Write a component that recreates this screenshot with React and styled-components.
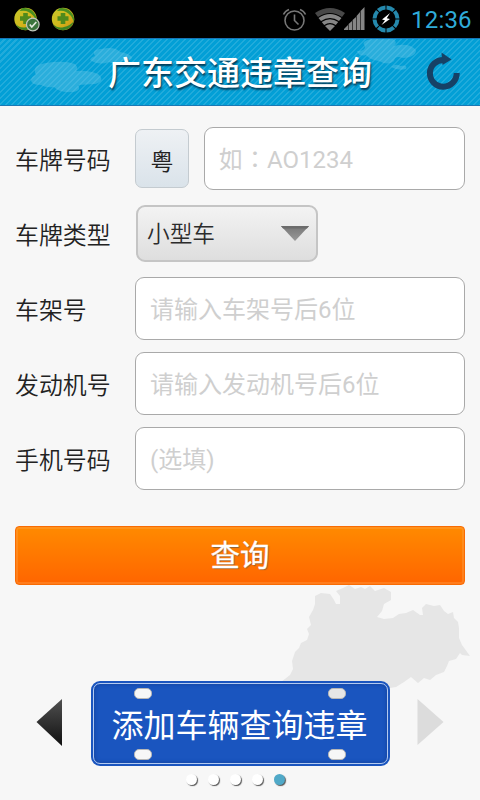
import React from "react";
import styled, { createGlobalStyle } from "styled-components";

const GlobalStyle = createGlobalStyle`
  * { box-sizing: border-box; }
  body {
    margin: 0;
    background: #f7f7f7;
    font-family: Roboto, "Noto Sans CJK SC", sans-serif;
  }
  input, button { font-family: inherit; margin: 0; }
`;

const Screen = styled.div`
  width: 480px;
  height: 800px;
  overflow: hidden;
  display: flex;
  flex-direction: column;
  background: #f7f7f7;
  color: #222;
`;

const StatusBar = styled.div`
  height: 38px;
  flex: none;
  display: flex;
  background: #000;
  justify-content: space-between;
`;

const StatusIcons = styled.svg`
  display: block;
  flex: none;
`;

const StatusRight = styled.div`
  display: flex;
`;

const Clock = styled.div`
  width: 74px;
  padding-left: 5px;
  font-size: 24px;
  line-height: 40px;
  letter-spacing: 0.2px;
  font-weight: 400;
  color: #2fabd9;
`;

const Header = styled.header`
  position: relative;
  height: 68px;
  flex: none;
  display: flex;
  align-items: center;
  justify-content: center;
  border-top: 1px solid #1675b8;
  border-bottom: 1px solid #1b78b4;
  background: repeating-linear-gradient(135deg, #029fd6 0 2.8px, #21abdb 2.8px 4.25px);
`;

const Clouds = styled.svg`
  position: absolute;
  inset: 0;
`;

const Title = styled.h1`
  position: relative;
  margin: 0;
  padding-top: 4px;
  font-size: 33px;
  line-height: 62px;
  font-weight: 500;
  color: #fff;
  text-shadow: 1px 2px 2px rgba(0, 30, 50, 0.8);
`;

const Refresh = styled.button`
  position: absolute;
  right: 16px;
  top: 12px;
  width: 38px;
  height: 42px;
  padding: 0;
  border: 0;
  background: none;
  svg { display: block; }
`;

const Form = styled.form`
  display: flex;
  flex-direction: column;
  gap: 12px;
  padding: 21px 15px 0;
`;

const Row = styled.div`
  display: flex;
  height: 63px;
  align-items: center;
`;

const Label = styled.label`
  width: 120px;
  flex: none;
  font-size: 23.9px;
  line-height: 36px;
  font-weight: 350;
  padding-top: 4px;
`;

const Field = styled.input`
  flex: 1;
  min-width: 0;
  height: 63px;
  padding: 3px 14px 0;
  border: 1px solid #a9a9a9;
  border-radius: 9px;
  background: #fff;
  font-size: 24px;
  font-weight: 400;
  outline: none;
  font-family: Roboto, ${(p) => (p.$centred ? '"Noto Sans CJK TC"' : '"Noto Sans CJK SC"')}, sans-serif;
  &::placeholder { color: #cfcfcf; opacity: 1; }
`;

const Province = styled.button`
  width: 54px;
  height: 59px;
  margin-right: 15px;
  padding: 3px 0 0;
  border: 1px solid #c4cbd0;
  border-radius: 7px;
  background: linear-gradient(#eef1f4, #dae3ea);
  font-size: 23px;
  font-weight: 400;
  color: #222;
`;

const Picker = styled.button`
  width: 182px;
  height: 57px;
  margin: 0 0 0 1px;
  padding: 0 9px 2px;
  display: flex;
  align-items: center;
  justify-content: space-between;
  border: 2px solid #c5c5c5;
  border-radius: 9px;
  background: linear-gradient(#f3f3f3, #dedede);
  font-size: 22.7px;
  font-weight: 350;
  color: #2c2c2c;
  svg { margin: 2px -2px 0 0; }
`;

const Submit = styled.button`
  height: 59px;
  margin-top: 24px;
  padding: 1px 0 0;
  border: 1px solid #f96b03;
  border-radius: 4px;
  background: linear-gradient(#ff8a00, #ff6500);
  box-shadow: inset 0 0 0 2px rgba(255, 160, 70, 0.4);
  color: #fff;
  font-size: 29.5px;
  font-weight: 400;
  -webkit-text-stroke: 0.3px #fff;
  line-height: 56px;
  text-shadow: 1px 1px 1px rgba(120, 90, 60, 0.8);
`;

const Footer = styled.div`
  position: relative;
  flex: 1;
  display: flex;
  flex-direction: column;
  align-items: center;
  padding-top: 96px;
`;

const MapArt = styled.svg`
  position: absolute;
  left: 280px;
  top: 0;
`;

const Carousel = styled.div`
  position: relative;
  width: 408px;
  height: 85px;
  display: flex;
  align-items: center;
  justify-content: space-between;
`;

const ArrowIcon = styled.svg`
  flex: none;
  margin-bottom: 2px;
`;

const Plate = styled.button`
  position: relative;
  width: 299px;
  height: 85px;
  padding: 2px;
  border: 0;
  border-radius: 9px;
  background: #1a55bf;
  color: #fff;
`;

const PlateFace = styled.div`
  height: 81px;
  display: flex;
  flex-direction: column;
  align-items: center;
  justify-content: space-between;
  padding: 4px 41px 3px 40px;
  border: 1px solid #b4caf0;
  border-radius: 7px;
  box-shadow: inset 0 0 4px #123f96;
`;

const Holes = styled.div`
  width: 100%;
  display: flex;
  justify-content: space-between;
`;

const Hole = styled.i`
  width: 18px;
  height: 11px;
  border: 1px solid #b7b7b7;
  border-radius: 5px;
  background: ${(p) => (p.$dim ? "#e6e6e6" : "#f7f7f7")};
`;

const PlateText = styled.span`
  padding-top: 4px;
  font-size: 32px;
  line-height: 40px;
  font-weight: 400;
  white-space: nowrap;
`;

const Dots = styled.div`
  display: flex;
  gap: 11px;
  margin-top: 8px;
  padding-right: 10px;
`;

const Dot = styled.i`
  width: 11px;
  height: 11px;
  border-radius: 50%;
  background: ${(p) => (p.$active ? "#50a9c8" : "#fff")};
  box-shadow: 1px 1px 1px #555;
`;

function Coin({ x, checked }) {
  return (
    <g transform={`translate(${x} 19)`}>
      <circle r="11.2" fill="url(#coin)" />
      <path d="M-3-11Q6-12 10-4Q12 0 11 3Q8-5 3-7Q0-9-6-8Z" fill="#4b8f20" />
      <path d="M-10 5Q-5 10 1 8Q7 7 11 2Q8 11 0 11.2Q-7 11-10 5Z" fill="#3d8524" />
      <path d="M-2.3-6H2.3V-2.8H5.5V1.8H2.3V5H-2.3V1.8H-5.5V-2.8H-2.3Z" fill="#4f8a1c" />
      {checked && (
        <g transform="translate(7.3 5.5)">
          <circle r="6.3" fill="#3b733c" stroke="#bfc5bb" strokeWidth="1.2" />
          <path d="M-3 0L-1 2.5L3.5-2.5" fill="none" stroke="#e2e8df" strokeWidth="1.7" />
        </g>
      )}
    </g>
  );
}

function Notifications() {
  return (
    <StatusIcons width="80" height="38">
      <defs>
        <linearGradient id="coin" x1="0" y1="0" x2="1" y2="1">
          <stop offset="0" stopColor="#c3c92e" />
          <stop offset="0.5" stopColor="#d2b81c" />
          <stop offset="1" stopColor="#d08d10" />
        </linearGradient>
      </defs>
      <Coin x={25.5} checked />
      <Coin x={63} />
    </StatusIcons>
  );
}

function SystemIcons() {
  return (
    <StatusIcons width="126" height="38" viewBox="280 0 126 38">
      <g fill="none" stroke="#777" strokeWidth="1.6">
        <circle cx="294.5" cy="20.5" r="9.5" />
        <path d="M294.5 14.5V20.5L298.5 24.5M283.5 14.5Q285 11 289 9.5M305.5 14.5Q304 11 300 9.5" />
      </g>
      <path d="M315 13Q330 3 345 13L342 17Q330 9 318 17Z" fill="#484848" />
      <g fill="#858585">
        <path d="M318.5 18Q330 10 341.5 18L339 21Q330 15 321 21Z" />
        <path d="M321.8 22Q330 16.5 338.2 22L335.8 25Q330 21 324.2 25Z" />
        <path d="M325 26Q330 22.5 335 26L330 31Z" />
        <path d="M344 30V29L348 25V30ZM348.6 30V24L352 21V30ZM352.6 30V20L356 17V30ZM356.6 30V16L360 12V30ZM360.6 30V11L364.5 7V30Z" />
      </g>
      <circle cx="386" cy="19" r="11.5" fill="none" stroke="#2589ad" strokeWidth="4" pathLength="80" strokeDasharray="8.8 1.2" strokeDashoffset="-0.6" />
      <path d="M390 13L382 19.5L385 20.2L381.5 25L390 19L386.8 18.2Z" fill="#fff" />
    </StatusIcons>
  );
}

const rows = [
  { label: "车架号", hint: "请输入车架号后6位" },
  { label: "发动机号", hint: "请输入发动机号后6位" },
  { label: "手机号码", hint: "(选填)" },
];

export default function App() {
  return (
    <Screen>
      <GlobalStyle />
      <StatusBar>
        <Notifications />
        <StatusRight>
          <SystemIcons />
          <Clock>12:36</Clock>
        </StatusRight>
      </StatusBar>
      <Header>
        <Clouds width="480" height="66" viewBox="0 39 480 66" fill="#7ccdea" fillOpacity="0.33">
          <path d="M31 80Q32 76 36 75Q31 65 46 63Q64 60 75 64Q79 68 76 71Q88 70 98 74Q106 81 95 84L78 85Q82 91 72 92Q59 93 54 87Q46 88 41 85Q31 85 31 80Z" />
          <path d="M90 60Q91 57 95 56Q91 50 101 49Q115 46 120 52Q128 53 132 57Q132 61 123 61Q116 66 109 62Q99 66 90 60Z" />
          <path d="M357 51Q366 51 365 46Q360 41 372 39H393Q398 42 394 46Q409 42 416 50Q416 57 403 58Q395 55 394 61Q388 66 379 61Q370 60 366 55Q359 57 357 51Z" />
          <path d="M391 67Q396 63 400 66Q408 64 406 69Q398 71 391 67Z" />
        </Clouds>
        <Title>广东交通违章查询</Title>
        <Refresh type="button" aria-label="刷新">
          <svg width="38" height="42" viewBox="426 51 38 42">
            <path d="M444 59.9A13.4 13.4 0 1 0 456.7 73" fill="none" stroke="#164166" strokeWidth="6" />
            <path d="M441.5 52.5L451.5 59.5L442.5 65Z" fill="#164166" />
          </svg>
        </Refresh>
      </Header>
      <Form>
        <Row>
          <Label>车牌号码</Label>
          <Province type="button">粤</Province>
          <Field $centred placeholder="如：AO1234" />
        </Row>
        <Row>
          <Label>车牌类型</Label>
          <Picker type="button">
            小型车
            <svg width="28" height="16">
              <defs>
                <linearGradient id="arrow" x1="0" y1="0" x2="0" y2="1">
                  <stop offset="0" stopColor="#777" />
                  <stop offset="1" stopColor="#999" />
                </linearGradient>
              </defs>
              <path d="M0 0H28L14 15Z" fill="url(#arrow)" />
              <path d="M0 0H28L26 2.5H2Z" fill="#6c6c6c" />
            </svg>
          </Picker>
        </Row>
        {rows.map((r) => (
          <Row key={r.label}>
            <Label>{r.label}</Label>
            <Field placeholder={r.hint} />
          </Row>
        ))}
        <Submit type="button">查询</Submit>
      </Form>
      <Footer>
        <MapArt width="192" height="125" viewBox="280 585 192 125" fill="#e6e6e6">
          <path d="M281 682L290 675L293 669L292 661L295 652L299 648L301 643L307 640L309 634L307 629L311 625L309 617L313 610L315 604L315 596L321 593L330 594L334 600L336 604L340 604L340 596L336 591L343 588L349 585L355 589L361 587L365 589L370 586L375 591L384 588L391 592L391 600L384 604L382 611L377 617L384 619L393 618L399 614L406 613L413 610L420 615L423 615L422 608L426 604L434 606L440 605L444 611L448 614L453 612L454 618L458 622L459 628L459 638L462 645L470 656L462 655L460 653L456 659L449 661L447 666L444 672L436 675L430 680L424 678L418 683L411 677L404 682L396 687L390 688L382 699H281Z" />
        </MapArt>
        <Carousel>
          <ArrowIcon width="27" height="48">
            <defs>
              <linearGradient id="prev" x1="0" y1="0" x2="0" y2="1">
                <stop offset="0" stopColor="#505050" />
                <stop offset="1" stopColor="#101010" />
              </linearGradient>
            </defs>
            <path d="M0.5 23L26 0V47Z" fill="url(#prev)" />
          </ArrowIcon>
          <Plate type="button">
            <PlateFace>
              <Holes><Hole /><Hole $dim /></Holes>
              <PlateText>添加车辆查询违章</PlateText>
              <Holes><Hole /><Hole /></Holes>
            </PlateFace>
          </Plate>
          <ArrowIcon width="27" height="48">
            <path d="M0.5 0L26.5 23L0.5 46Z" fill="#dcdcdc" />
          </ArrowIcon>
        </Carousel>
        <Dots>
          <Dot /><Dot /><Dot /><Dot /><Dot $active />
        </Dots>
      </Footer>
    </Screen>
  );
}
